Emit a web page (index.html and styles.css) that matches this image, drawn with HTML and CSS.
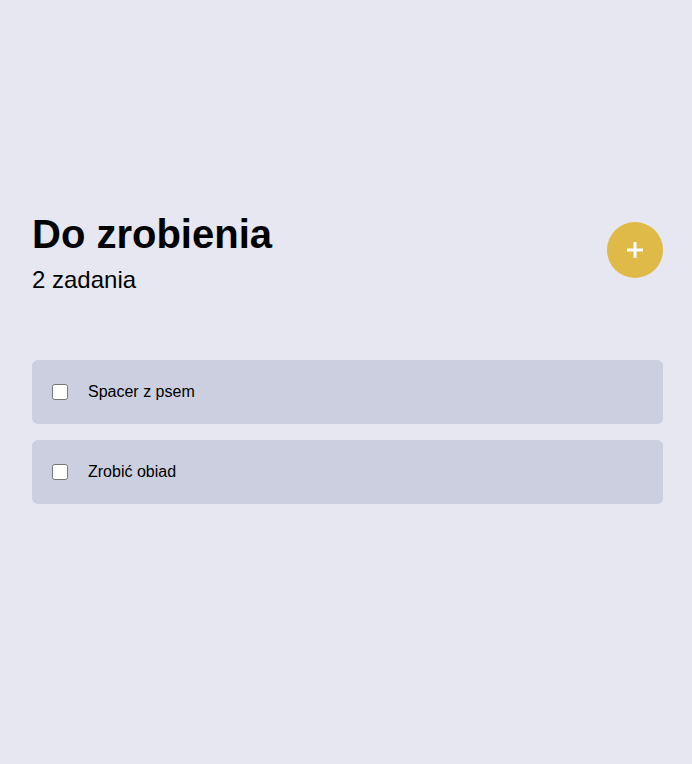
FILE: index.html
```html
<!DOCTYPE html>
<html lang="pl">
<head>
<meta charset="utf-8">
<title>Do zrobienia</title>
<link rel="stylesheet" href="styles.css">
</head>
<body>
<main class="app">
  <header class="header">
    <div class="titles">
      <h1 class="title">Do zrobienia</h1>
      <p class="count">2 zadania</p>
    </div>
    <button class="add" type="button" aria-label="Dodaj">
      <svg width="20" height="20" viewBox="0 0 20 20"><path d="M10 2v16M2 10h16" stroke="#fff" stroke-width="3"/></svg>
    </button>
  </header>
  <ul class="list">
    <li class="item"><input type="checkbox" class="check"><span class="label">Spacer z psem</span></li>
    <li class="item"><input type="checkbox" class="check"><span class="label">Zrobić obiad</span></li>
  </ul>
</main>
</body>
</html>
```
FILE: styles.css
```css
html, body {
  margin: 0;
  background: #e6e7f0;
  font-family: "Liberation Sans", Arial, sans-serif;
  color: #000;
}
.app {
  padding: 211px 29px 0 32px;
}
.header {
  display: flex;
  justify-content: space-between;
  align-items: center;
}
.title {
  margin: 0;
  font-size: 40px;
  font-weight: bold;
  line-height: 46px;
}
.count {
  margin: 9px 0 0;
  font-size: 24px;
  line-height: 28px;
}
.add {
  width: 56px;
  height: 56px;
  border-radius: 50%;
  border: none;
  background: #e0ba48;
  display: flex;
  align-items: center;
  justify-content: center;
  padding: 0;
  margin-top: -5px;
}
.list {
  list-style: none;
  margin: 66px 0 0;
  padding: 0;
  display: flex;
  flex-direction: column;
  gap: 16px;
}
.item {
  height: 64px;
  background: #cbcfe0;
  border-radius: 6px;
  display: flex;
  align-items: center;
  padding-left: 20px;
  gap: 20px;
  font-size: 16px;
}
.check {
  margin: 0;
  width: 16px;
  height: 16px;
}
```
